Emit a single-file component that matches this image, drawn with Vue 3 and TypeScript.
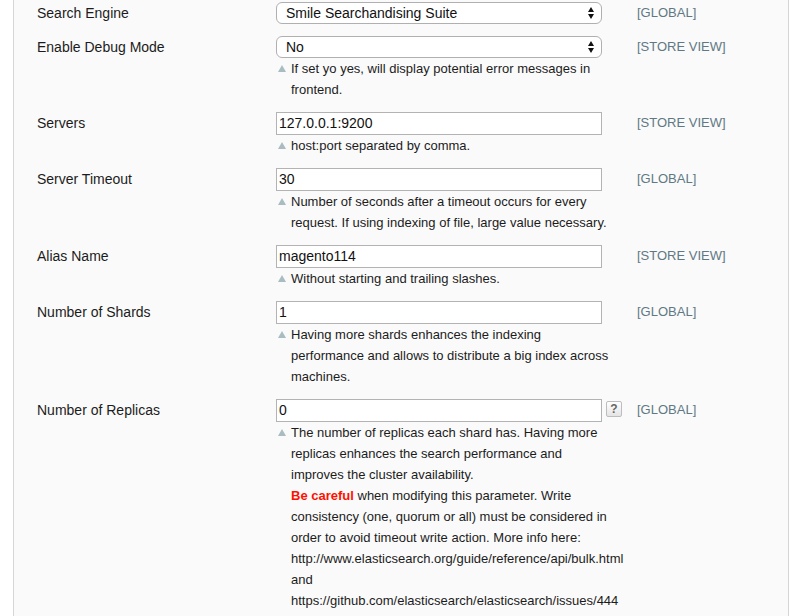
<script setup lang="ts">
import { reactive } from 'vue'

interface Field {
  id: string
  label: string
  scope: string
  value: string
  options?: string[]
  note?: string
  warning?: string
  details?: string
  help?: boolean
}

const fields = reactive<Field[]>([
  {
    id: 'engine',
    label: 'Search Engine',
    scope: '[GLOBAL]',
    value: 'Smile Searchandising Suite',
    options: ['Smile Searchandising Suite'],
  },
  {
    id: 'debug',
    label: 'Enable Debug Mode',
    scope: '[STORE VIEW]',
    value: 'No',
    options: ['No', 'Yes'],
    note: 'If set yo yes, will display potential error messages in frontend.',
  },
  {
    id: 'servers',
    label: 'Servers',
    scope: '[STORE VIEW]',
    value: '127.0.0.1:9200',
    note: 'host:port separated by comma.',
  },
  {
    id: 'timeout',
    label: 'Server Timeout',
    scope: '[GLOBAL]',
    value: '30',
    note: 'Number of seconds after a timeout occurs for every request. If using indexing of file, large value necessary.',
  },
  {
    id: 'alias',
    label: 'Alias Name',
    scope: '[STORE VIEW]',
    value: 'magento114',
    note: 'Without starting and trailing slashes.',
  },
  {
    id: 'shards',
    label: 'Number of Shards',
    scope: '[GLOBAL]',
    value: '1',
    note: 'Having more shards enhances the indexing performance and allows to distribute a big index across machines.',
  },
  {
    id: 'replicas',
    label: 'Number of Replicas',
    scope: '[GLOBAL]',
    value: '0',
    note: 'The number of replicas each shard has. Having more replicas enhances the search performance and improves the cluster availability.',
    warning: 'Be careful',
    details:
      'when modifying this parameter. Write consistency (one, quorum or all) must be considered in order to avoid timeout write action. More info here: http://www.elasticsearch.org/guide/reference/api/bulk.html and https://github.com/elasticsearch/elasticsearch/issues/444',
    help: true,
  },
])
</script>

<template>
  <form class="panel" @submit.prevent>
    <div v-for="f in fields" :key="f.id" class="row">
      <label class="label" :for="f.id">{{ f.label }}</label>
      <div class="field">
        <div v-if="f.options" class="select-wrap">
          <select :id="f.id" v-model="f.value" class="select">
            <option v-for="o in f.options" :key="o">{{ o }}</option>
          </select>
          <svg class="arrows" viewBox="0 0 6 12" aria-hidden="true">
            <path d="M3 0L6 5H0zM3 12L0 7H6z" fill="#111" />
          </svg>
        </div>
        <input v-else :id="f.id" v-model="f.value" class="input" type="text" />
        <div v-if="f.note" class="note">
          <svg class="marker" viewBox="0 0 8 7" aria-hidden="true">
            <path d="M4 0L8 7H0z" fill="#a9bcc1" />
          </svg>
          <div class="note-text">
            <p>{{ f.note }}</p>
            <p v-if="f.warning">
              <strong class="warning">{{ f.warning }}</strong> {{ f.details }}
            </p>
          </div>
        </div>
      </div>
      <div class="help-cell">
        <button v-if="f.help" class="help" type="button">?</button>
      </div>
      <span class="scope">{{ f.scope }}</span>
    </div>
  </form>
</template>

<style>
body {
  margin: 0;
  background: #fff;
}
</style>

<style scoped>
.panel {
  box-sizing: border-box;
  min-height: 100vh;
  margin: 0 11px 0 13px;
  padding: 2px 23px 0;
  border: solid #d6d6d6;
  border-width: 0 1px;
  background: #fafafa;
  color: #1c1c1c;
  font-family: "Liberation Sans", Arial, sans-serif;
  font-size: 14px;
}
.row {
  display: grid;
  grid-template-columns: 239px minmax(0, 1fr) 35px 128px;
  padding-bottom: 12px;
}
.row:last-child {
  padding-bottom: 0;
}
.label {
  line-height: 22px;
}
.scope {
  color: #607884;
  font-size: 13px;
  line-height: 21px;
}
.select-wrap {
  display: grid;
  align-items: center;
}
.select,
.arrows {
  grid-area: 1 / 1;
}
.select,
.input {
  box-sizing: border-box;
  width: 100%;
  margin: 0;
  color: #111;
  background: #fff;
  font: inherit;
  outline: none;
}
.select {
  height: 22px;
  padding: 0 24px 0 9px;
  border: 1px solid #b0b0b0;
  border-radius: 6px;
  appearance: none;
}
.arrows {
  width: 6px;
  height: 12px;
  margin-right: 8px;
  justify-self: end;
  pointer-events: none;
}
.input {
  display: block;
  height: 23px;
  padding: 0 2px 2px;
  border: 1px solid #b3b3b3;
}
.note {
  display: flex;
  gap: 5px;
  margin-right: -10px;
  padding-left: 2px;
}
.marker {
  flex: none;
  width: 8px;
  height: 7px;
  margin-top: 7px;
}
.note-text {
  min-width: 0;
  font-size: 13px;
  line-height: 21px;
}
.note-text p {
  margin: 0;
}
.warning {
  color: #ff1000;
}
.help {
  display: block;
  box-sizing: border-box;
  width: 16px;
  height: 16px;
  margin: 2px 0 0 4px;
  padding: 0;
  border: 1px solid #bdbdbd;
  border-radius: 2px;
  background: linear-gradient(#fff, #e4e4e4);
  color: #666;
  font: bold 12px/14px "Liberation Sans", Arial, sans-serif;
}
</style>
